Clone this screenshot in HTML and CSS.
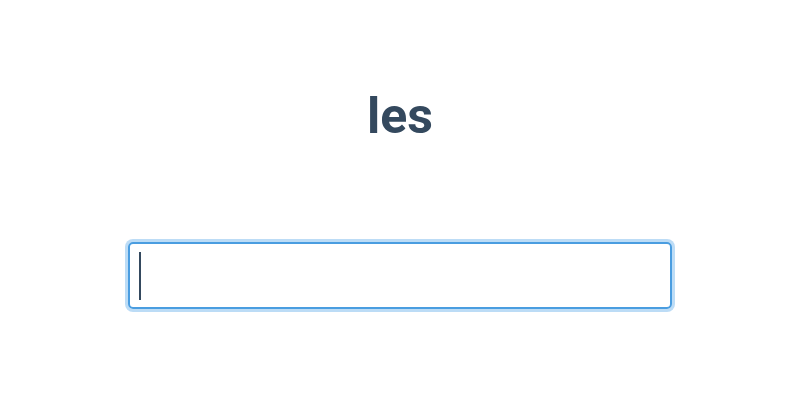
FILE: index.html
```html
<!DOCTYPE html>
<html>
<head>
<meta charset="utf-8">
<link rel="stylesheet" href="styles.css">
</head>
<body>
<main class="page">
  <h1 class="title">les</h1>
  <div class="field">
    <span class="caret"></span>
  </div>
</main>
</body>
</html>
```
FILE: styles.css
```css
html, body {
  margin: 0;
  padding: 0;
  background: #ffffff;
}
.page {
  width: 800px;
  height: 400px;
  display: flex;
  flex-direction: column;
  align-items: center;
  font-family: Roboto, "Liberation Sans", sans-serif;
}
.title {
  margin: 81px 0 0 0;
  font-size: 50px;
  line-height: 70px;
  font-weight: 700;
  color: #34495e;
}
.field {
  margin-top: 91px;
  box-sizing: border-box;
  width: 544px;
  height: 67px;
  border: 2px solid #4a9de0;
  border-radius: 5px;
  box-shadow: 0 0 0 3px #bcdcf6;
  display: flex;
  align-items: center;
  padding-left: 9px;
}
.caret {
  width: 2px;
  height: 48px;
  background: #34495e;
}
```
